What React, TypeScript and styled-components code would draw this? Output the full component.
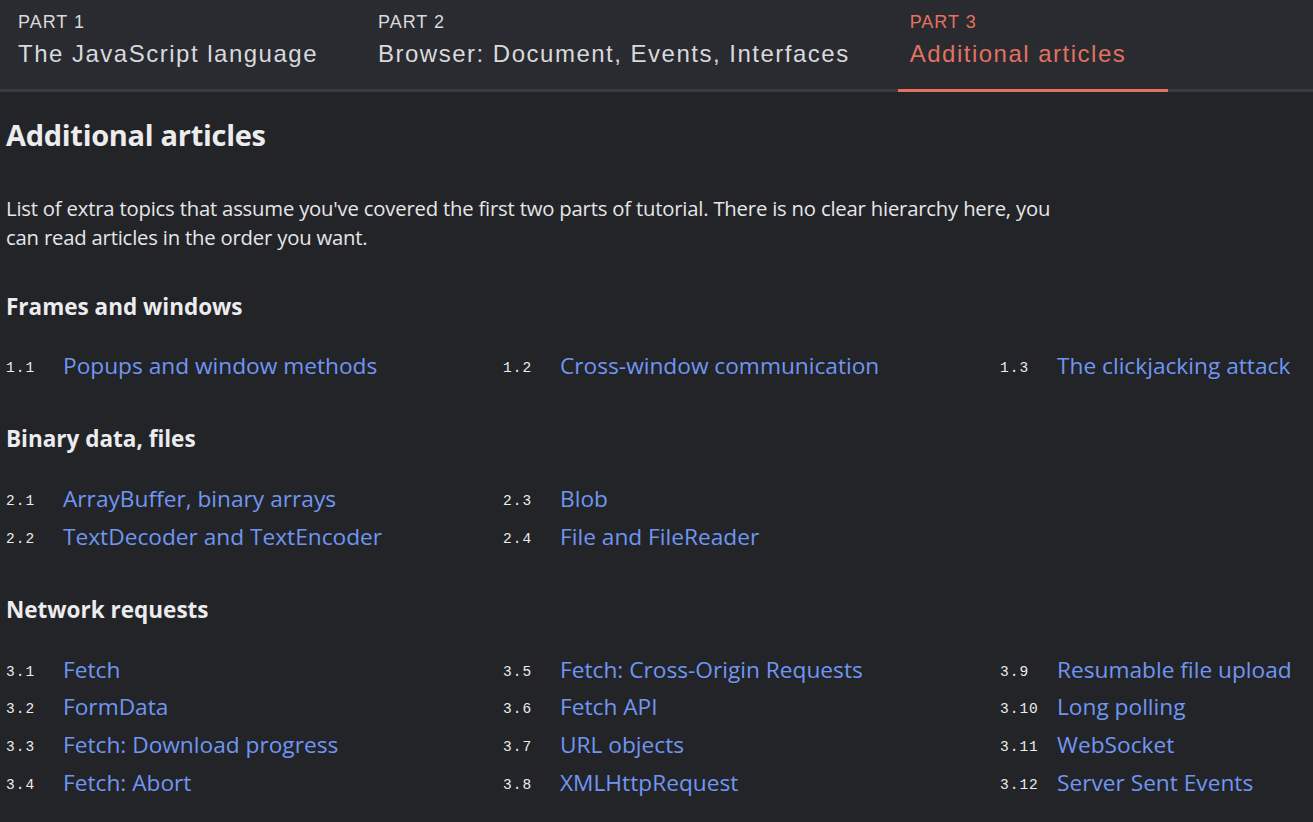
import React from "react";
import styled, { createGlobalStyle } from "styled-components";

const GlobalStyle = createGlobalStyle`
  html, body {
    margin: 0;
    padding: 0;
    background: #232428;
    overflow: hidden;
  }
  * { box-sizing: border-box; }
`;

const Page = styled.div`
  width: 1313px;
  min-height: 822px;
  background: #232428;
  color: #e6e6e8;
  font-family: "Open Sans", "Noto Sans", sans-serif;
  overflow: hidden;
`;

const TabBar = styled.nav`
  display: flex;
  gap: 6px;
  height: 92px;
  padding-left: 6px;
  background: #292b30;
  border-bottom: 3px solid #3a3b45;
`;

const Tab = styled.a<{ $active?: boolean }>`
  display: flex;
  flex-direction: column;
  padding: 12px 42px 0 12px;
  margin-bottom: -3px;
  border-bottom: 3px solid ${(p) => (p.$active ? "#e2715f" : "transparent")};
  color: ${(p) => (p.$active ? "#e2715f" : "#d9d9dc")};
  font-family: "Liberation Sans", Arial, sans-serif;
  text-decoration: none;
`;

const TabPart = styled.span`
  font-size: 18px;
  letter-spacing: 1px;
  line-height: 20px;
`;

const TabTitle = styled.span`
  margin-top: 8px;
  font-size: 24px;
  letter-spacing: 1.5px;
  line-height: 28px;
  white-space: nowrap;
`;

const Content = styled.main`
  padding: 23px 0 0 6px;
`;

const Title = styled.h1`
  margin: 0;
  font-size: 29px;
  font-weight: 700;
  line-height: 40px;
  letter-spacing: -0.3px;
  color: #ececee;
`;

const Intro = styled.p`
  margin: 39px 0 0;
  max-width: 1072px;
  font-size: 20.3px;
  letter-spacing: -0.2px;
  line-height: 29px;
`;

const Section = styled.section`
  margin-top: 39.5px;
`;

const SectionTitle = styled.h2`
  margin: 0 0 25.7px;
  font-size: 22.5px;
  font-weight: 700;
  line-height: 30px;
  color: #ececee;
`;

const List = styled.ol<{ $rows: number }>`
  list-style: none;
  margin: 0;
  padding: 0;
  display: grid;
  grid-template-columns: repeat(3, 497px);
  grid-template-rows: repeat(${(p) => p.$rows}, 37.7px);
  grid-auto-flow: column;
`;

const Item = styled.li`
  display: flex;
  align-items: baseline;
  white-space: nowrap;
`;

const Num = styled.span`
  position: relative;
  top: -2px;
  width: 57px;
  flex: none;
  font-family: "Liberation Mono", "DejaVu Sans Mono", monospace;
  font-size: 14.5px;
  letter-spacing: 1px;
  color: #ececee;
`;

const Link = styled.a`
  font-size: 22.7px;
  line-height: 37.7px;
  color: #7096f2;
  text-decoration: none;
`;

const tabs = [
  { part: "PART 1", title: "The JavaScript language" },
  { part: "PART 2", title: "Browser: Document, Events, Interfaces" },
  { part: "PART 3", title: "Additional articles", active: true },
];

const sections = [
  {
    title: "Frames and windows",
    items: [
      ["1.1", "Popups and window methods"],
      ["1.2", "Cross-window communication"],
      ["1.3", "The clickjacking attack"],
    ],
  },
  {
    title: "Binary data, files",
    items: [
      ["2.1", "ArrayBuffer, binary arrays"],
      ["2.2", "TextDecoder and TextEncoder"],
      ["2.3", "Blob"],
      ["2.4", "File and FileReader"],
    ],
  },
  {
    title: "Network requests",
    items: [
      ["3.1", "Fetch"],
      ["3.2", "FormData"],
      ["3.3", "Fetch: Download progress"],
      ["3.4", "Fetch: Abort"],
      ["3.5", "Fetch: Cross-Origin Requests"],
      ["3.6", "Fetch API"],
      ["3.7", "URL objects"],
      ["3.8", "XMLHttpRequest"],
      ["3.9", "Resumable file upload"],
      ["3.10", "Long polling"],
      ["3.11", "WebSocket"],
      ["3.12", "Server Sent Events"],
    ],
  },
];

export default function App() {
  return (
    <Page>
      <GlobalStyle />
      <TabBar>
        {tabs.map((t) => (
          <Tab key={t.part} href="#" $active={t.active}>
            <TabPart>{t.part}</TabPart>
            <TabTitle>{t.title}</TabTitle>
          </Tab>
        ))}
      </TabBar>
      <Content>
        <Title>Additional articles</Title>
        <Intro>
          List of extra topics that assume you've covered the first two parts of tutorial. There is no clear
          hierarchy here, you can read articles in the order you want.
        </Intro>
        {sections.map((s) => (
          <Section key={s.title}>
            <SectionTitle>{s.title}</SectionTitle>
            <List $rows={Math.ceil(s.items.length / 3)}>
              {s.items.map(([n, label]) => (
                <Item key={n}>
                  <Num>{n}</Num>
                  <Link href="#">{label}</Link>
                </Item>
              ))}
            </List>
          </Section>
        ))}
      </Content>
    </Page>
  );
}
